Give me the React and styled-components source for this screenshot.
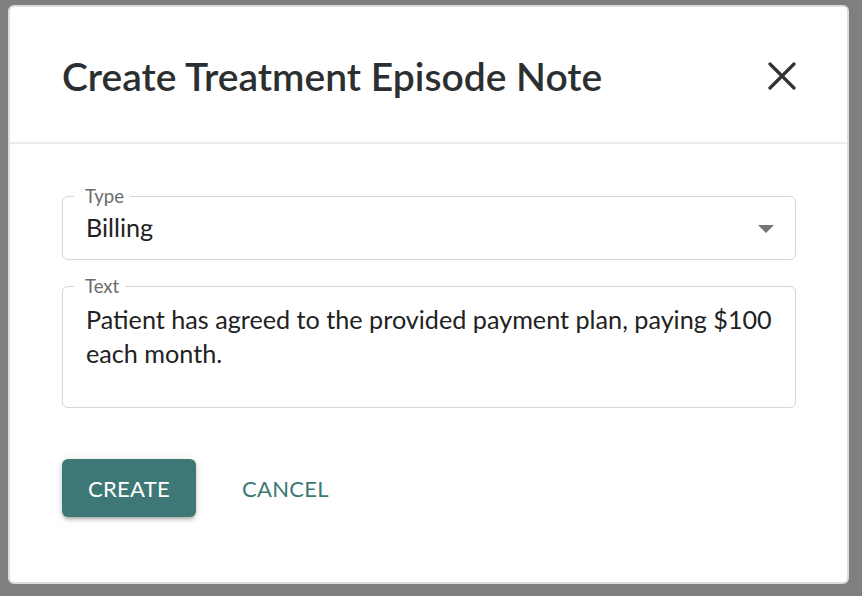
import React from "react";
import styled, { createGlobalStyle } from "styled-components";

const Global = createGlobalStyle`
  html, body {
    margin: 0;
    padding: 0;
    background: #7f7f7f;
    font-family: Lato, "Noto Sans", sans-serif;
  }
`;

const Backdrop = styled.div`
  width: 862px;
  height: 596px;
  padding: 5px 0 0 8px;
  box-sizing: border-box;
`;

const Dialog = styled.div`
  width: 841px;
  height: 579px;
  box-sizing: border-box;
  background: #fff;
  border: 2px solid #dcdcdc;
  border-radius: 6px;
  display: flex;
  flex-direction: column;
`;

const Header = styled.div`
  height: 137px;
  display: flex;
  align-items: center;
  justify-content: space-between;
  padding: 3px 48px 0 52px;
  box-sizing: border-box;
  border-bottom: 2px solid #ebebeb;
`;

const Title = styled.h2`
  margin: 0;
  font-size: 39px;
  font-weight: 600;
  color: #2b2f30;
`;

const CloseButton = styled.button`
  border: none;
  background: none;
  padding: 0;
  width: 34px;
  height: 34px;
  display: flex;
  align-items: center;
  justify-content: center;
  cursor: pointer;
`;

const Body = styled.div`
  display: flex;
  flex-direction: column;
  gap: 15px;
  padding: 41px 51px 0 52px;
`;

const Field = styled.fieldset`
  margin: 0;
  padding: 0 22px ${(p) => p.$bottom}px 23px;
  border: 1.5px solid #d6d6d6;
  border-radius: 6px;
  position: relative;
  min-height: ${(p) => p.$height}px;
  box-sizing: border-box;
`;

const Legend = styled.legend`
  margin-left: -12px;
  padding: 0 6px 0 11px;
  font-size: 18.5px;
  line-height: 22px;
  color: #6b6b6b;
`;

const Value = styled.div`
  font-size: 25.2px;
  line-height: 34px;
  padding-top: ${(p) => (p.$select ? 3 : 5)}px;
  color: #222;
  padding-right: ${(p) => (p.$select ? 40 : 0)}px;
`;

const Arrow = styled.span`
  position: absolute;
  right: 21px;
  top: 18px;
  width: 0;
  height: 0;
  border-left: 8px solid transparent;
  border-right: 8px solid transparent;
  border-top: 8px solid #757575;
`;

const Actions = styled.div`
  display: flex;
  align-items: center;
  gap: 30px;
  padding: 51px 52px 0;
`;

const PrimaryButton = styled.button`
  width: 134px;
  height: 58px;
  border: none;
  border-radius: 6px;
  background: #3d7876;
  color: #fff;
  font-family: Lato, sans-serif;
  font-size: 22px;
  text-transform: uppercase;
  letter-spacing: 0.3px;
  box-shadow: 0 3px 3px -2px rgba(0,0,0,0.2), 0 3px 4px 0 rgba(0,0,0,0.14), 0 1px 8px 0 rgba(0,0,0,0.12);
  cursor: pointer;
`;

const TextButton = styled.button`
  border: none;
  background: none;
  height: 58px;
  padding: 0 16px;
  color: #3d7876;
  font-family: Lato, sans-serif;
  font-size: 22px;
  text-transform: uppercase;
  letter-spacing: 0.3px;
  cursor: pointer;
`;

export default function App() {
  return (
    <>
      <Global />
      <Backdrop>
        <Dialog>
          <Header>
            <Title>Create Treatment Episode Note</Title>
            <CloseButton aria-label="close">
              <svg width="28" height="28" viewBox="0 0 28 28">
                <path d="M2 2 L26 26 M26 2 L2 26" stroke="#333" strokeWidth="3.2" strokeLinecap="round" />
              </svg>
            </CloseButton>
          </Header>
          <Body>
            <Field $height={75} $bottom={12}>
              <Legend>Type</Legend>
              <Value $select>Billing</Value>
              <Arrow />
            </Field>
            <Field $height={133} $bottom={20}>
              <Legend>Text</Legend>
              <Value>Patient has agreed to the provided payment plan, paying $100 each month.</Value>
            </Field>
          </Body>
          <Actions>
            <PrimaryButton>Create</PrimaryButton>
            <TextButton>Cancel</TextButton>
          </Actions>
        </Dialog>
      </Backdrop>
    </>
  );
}
